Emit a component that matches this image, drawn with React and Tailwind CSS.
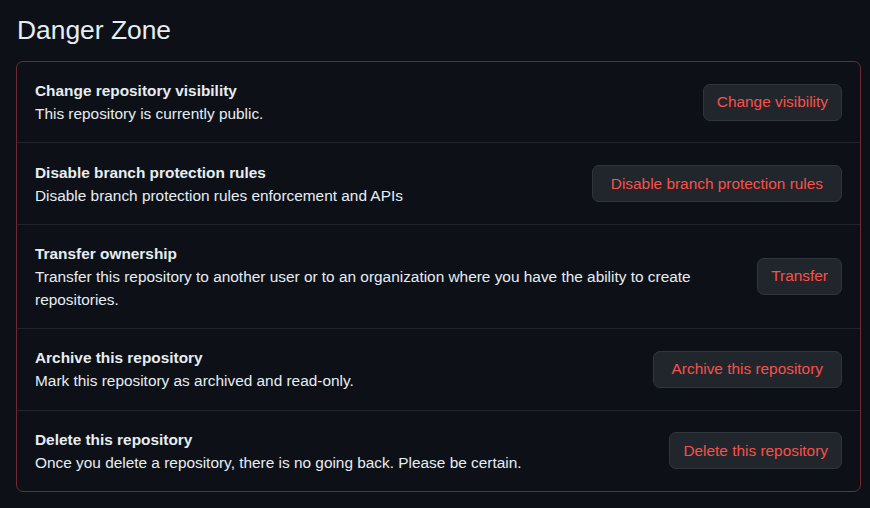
const rows = [
  {
    title: 'Change repository visibility',
    description: 'This repository is currently public.',
    action: 'Change visibility',
  },
  {
    title: 'Disable branch protection rules',
    description: 'Disable branch protection rules enforcement and APIs',
    action: 'Disable branch protection rules',
    wide: true,
  },
  {
    title: 'Transfer ownership',
    description:
      'Transfer this repository to another user or to an organization where you have the ability to create repositories.',
    action: 'Transfer',
  },
  {
    title: 'Archive this repository',
    description: 'Mark this repository as archived and read-only.',
    action: 'Archive this repository',
    wide: true,
  },
  {
    title: 'Delete this repository',
    description: 'Once you delete a repository, there is no going back. Please be certain.',
    action: 'Delete this repository',
  },
];

export default function App() {
  return (
    <div className="min-h-[508px] bg-[#0d1117] pl-4 pr-[9px] pt-[14px] font-['Liberation_Sans',Arial,sans-serif] text-[#e6edf3]">
      <h2 className="mb-[15px] pl-px text-[26.4px] leading-[32px]">Danger Zone</h2>
      <div className="rounded-[7px] border border-[#6e2a33]">
        {rows.map((row, i) => (
          <div
            key={row.title}
            className={`flex items-center justify-between gap-4 px-[18px] py-[17.2px] ${
              i > 0 ? 'border-t border-[#21262d]' : ''
            }`}
          >
            <div className="flex-1">
              <h3 className="text-[15.4px] font-bold leading-[23px]">{row.title}</h3>
              <p className="text-[15.4px] leading-[23px]">{row.description}</p>
            </div>
            <button
              type="button"
              className={`shrink-0 rounded-[7px] border border-[#30363d] bg-[#21262d] py-[7.5px] text-[15.4px] leading-[20px] text-[#f85149] ${
                row.wide ? 'px-[18px]' : 'px-[13px]'
              }`}
            >
              {row.action}
            </button>
          </div>
        ))}
      </div>
    </div>
  );
}
